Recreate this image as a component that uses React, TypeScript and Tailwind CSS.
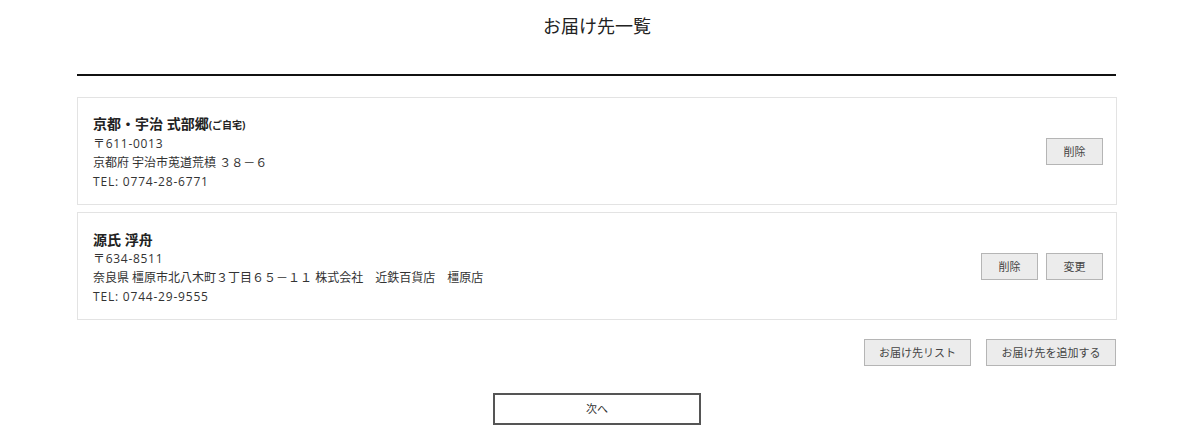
import React from 'react'

interface Address {
  id: number
  name: string
  tag?: string
  zip: string
  address: string
  tel: string
  canEdit: boolean
}

const addresses: Address[] = [
  {
    id: 1,
    name: '京都・宇治 式部郷',
    tag: '(ご自宅)',
    zip: '〒611-0013',
    address: '京都府 宇治市莵道荒槙 ３８－６',
    tel: 'TEL: 0774-28-6771',
    canEdit: false,
  },
  {
    id: 2,
    name: '源氏 浮舟',
    zip: '〒634-8511',
    address: '奈良県 橿原市北八木町３丁目６５－１１ 株式会社　近鉄百貨店　橿原店',
    tel: 'TEL: 0744-29-9555',
    canEdit: true,
  },
]

const font = { fontFamily: '"Open Sans", "Noto Sans CJK JP", sans-serif' }

function GrayButton({ children, className = '' }: { children: React.ReactNode; className?: string }) {
  return (
    <button
      className={`h-[27px] bg-[#ececec] border border-[#b5b5b5] text-[11px] text-[#444] leading-none ${className}`}
    >
      {children}
    </button>
  )
}

function AddressCard({ item }: { item: Address }) {
  return (
    <div className="flex items-center justify-between h-[108px] border border-[#e3e3e3] pl-[15px] pr-[13px]">
      <div className="text-[12px] leading-[19px] text-[#333]">
        <div className="text-[14px] font-bold leading-[22px] text-[#222] mb-[-2px] mt-[2px]">
          {item.name}
          {item.tag && <span className="text-[10px]">{item.tag}</span>}
        </div>
        <div className="tracking-[0.7px]">{item.zip}</div>
        <div>{item.address}</div>
        <div className="tracking-[0.8px]">{item.tel}</div>
      </div>
      <div className="flex gap-2">
        <GrayButton className="w-[57px]">削除</GrayButton>
        {item.canEdit && <GrayButton className="w-[57px]">変更</GrayButton>}
      </div>
    </div>
  )
}

export default function App() {
  return (
    <div className="w-[1200px] h-[440px] bg-white" style={font}>
      <div className="w-[1040px] ml-[77px]">
        {/* Title */}
        <h1 className="pt-[14px] text-center text-[18px] leading-[24px] text-[#222]">お届け先一覧</h1>
        <div className="mt-[36px] h-[2px] bg-[#111] w-[1039px]" />

        {/* Address list */}
        <div className="mt-[21px] flex flex-col gap-[7px]">
          {addresses.map((a) => (
            <AddressCard key={a.id} item={a} />
          ))}
        </div>

        {/* Actions */}
        <div className="mt-[19px] flex justify-end gap-[15px] pr-[1px]">
          <GrayButton className="w-[107px]">お届け先リスト</GrayButton>
          <GrayButton className="w-[130px]">お届け先を追加する</GrayButton>
        </div>

        <div className="mt-[27px] flex justify-center">
          <button className="w-[208px] h-[32px] border-2 border-[#555] bg-white text-[11px] text-[#333]">
            次へ
          </button>
        </div>
      </div>
    </div>
  )
}
